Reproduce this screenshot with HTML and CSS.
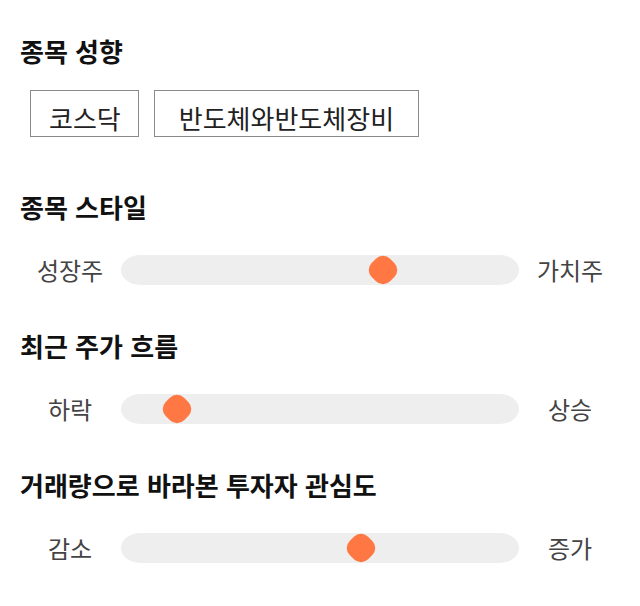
FILE: index.html
```html
<!DOCTYPE html>
<html lang="ko">
<head>
<meta charset="utf-8">
<title>종목 성향</title>
<link rel="stylesheet" href="styles.css">
</head>
<body>
<main class="panel">
  <section class="section section-first">
    <h2 class="title">종목 성향</h2>
    <div class="tags">
      <span class="tag">코스닥</span>
      <span class="tag tag-wide">반도체와반도체장비</span>
    </div>
  </section>
  <section class="section">
    <h2 class="title">종목 스타일</h2>
    <div class="slider-row">
      <span class="label">성장주</span>
      <div class="track"><span class="thumb" style="left: 65.75%"></span></div>
      <span class="label">가치주</span>
    </div>
  </section>
  <section class="section">
    <h2 class="title">최근 주가 흐름</h2>
    <div class="slider-row">
      <span class="label">하락</span>
      <div class="track"><span class="thumb" style="left: 14%"></span></div>
      <span class="label">상승</span>
    </div>
  </section>
  <section class="section">
    <h2 class="title">거래량으로 바라본 투자자 관심도</h2>
    <div class="slider-row">
      <span class="label">감소</span>
      <div class="track"><span class="thumb" style="left: 60.25%"></span></div>
      <span class="label">증가</span>
    </div>
  </section>
</main>
</body>
</html>
```
FILE: styles.css
```css
html, body {
  margin: 0;
  padding: 0;
  background: #ffffff;
}

body {
  font-family: "Noto Sans CJK KR", "Noto Sans", sans-serif;
  color: #111111;
}

.panel {
  display: flex;
  flex-direction: column;
  gap: 44px;
  padding: 34px 20px 0;
}

.section-first {
  margin-bottom: 9px;
}

.title {
  margin: 0;
  font-size: 26px;
  font-weight: 700;
  line-height: 34px;
  color: #111111;
}

.tags {
  display: flex;
  gap: 15px;
  margin-top: 22px;
  padding-left: 10px;
}

.tag {
  display: inline-block;
  border: 1px solid #8a8a8a;
  padding: 12px 17px 3px 18px;
  font-size: 26px;
  line-height: 30px;
  color: #222222;
}

.tag-wide {
  padding-left: 24px;
  padding-right: 24px;
}

.slider-row {
  display: grid;
  grid-template-columns: 100px 400px 100px;
  align-items: center;
  margin-top: 31px;
  height: 30px;
}

.label {
  text-align: center;
  font-size: 24px;
  line-height: 30px;
  color: #444444;
}

.track {
  position: relative;
  height: 30px;
  margin: 0 1px;
  background: #eeeeee;
  border-radius: 19px / 15px;
}

.thumb {
  position: absolute;
  top: 50%;
  width: 26px;
  height: 26px;
  background: #ff7843;
  border-radius: 10px;
  transform: translate(-50%, -50%) rotate(45deg);
}
```
